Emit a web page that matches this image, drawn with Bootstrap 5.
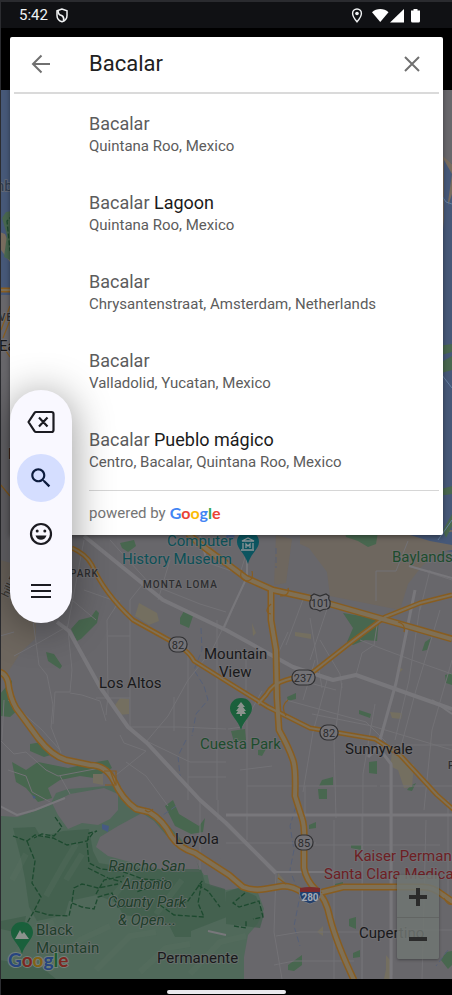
<!DOCTYPE html>
<html lang="en">
<head>
<meta charset="utf-8">
<meta name="viewport" content="width=device-width, initial-scale=1">
<title>Place search</title>
<link rel="stylesheet" href="https://cdn.jsdelivr.net/npm/bootstrap@5.3.0/dist/css/bootstrap.min.css">
<style>
  body { background: #000; font-family: Roboto, "Liberation Sans", sans-serif; color: #202124; }
  .device { border-left: 1px solid #2b2c30; }
  .status-strip { height: 28px; background: #101114; border-top: 2px solid #2a2b2f; color: #f1f3f4; font-size: 15px; padding: 0 31px 0 18px; }
  .map-layer { top: 62px; background: #68676b; }
  .search-panel { margin: 9px 9px 0; padding: 0 4px; background: #fff; border-radius: 2px; box-shadow: 0 2px 5px rgba(0,0,0,.4); z-index: 1; }
  .search-head { height: 57px; border-bottom: 2px solid #dadada; padding: 0 15px 2px; }
  .icon-btn { border: 0; background: transparent; padding: 0; line-height: 0; color: #707070; }
  .query { font-size: 22px; line-height: 28px; color: #212121; border: 0; outline: 0; background: transparent; margin: 0 16px 0 36px; padding: 0; min-width: 0; }
  .results { padding-top: 1px; }
  .place { padding: 18px 0 17px 75px; line-height: 22px; color: #5c5c5c; }
  .place:hover { background: #f6f6f6; color: #5c5c5c; }
  .place-name { font-size: 18px; }
  .place-name b { font-weight: 400; color: #1b1b1b; }
  .place-area { font-size: 15px; }
  .credit { margin-left: 75px; height: 45px; border-top: 1px solid #d6d6d6; font-size: 15px; color: #757575; }
  .logo { font-family: Lato, "Liberation Sans", sans-serif; font-weight: 700; font-size: 16px; }
  .g-blue { color: #4285f4; } .g-red { color: #ea4335; } .g-yellow { color: #fbbc05; } .g-green { color: #34a853; }
  .tool-pill { left: 9px; top: 362px; padding: 8px 7px 9px; border-radius: 31px; background: #f9f8ff; box-shadow: 0 4px 40px rgba(0,0,0,.42); z-index: 2; }
  .tool-btn { width: 48px; height: 48px; border: 0; border-radius: 50%; background: transparent; color: #1b1b21; padding: 0; }
  .tool-btn.current { background: #d5deff; color: #0c1b3d; }
  .zoom-box { right: 13px; bottom: 20px; width: 42px; background: rgba(112,117,114,.85); box-shadow: 0 1px 3px rgba(0,0,0,.35); border-radius: 2px; }
  .zoom-box button { height: 42px; border: 0; background: transparent; color: #2b2b2b; padding: 0; }
  .zoom-box button + button { border-top: 1px solid #626563; }
  .home-strip { height: 16px; }
  .home-strip span { width: 119px; height: 4px; border-radius: 2px; background: #e9e8ec; margin-bottom: 1px; }
  .map-text { font-size: 15px; fill: #19191a; stroke: #737276; stroke-width: 2px; stroke-opacity: .6; paint-order: stroke; stroke-linejoin: round; }
  .map-text .area { font-size: 10px; font-weight: 500; letter-spacing: 1px; fill: #2d2d2f; }
  .map-text .shield { font-size: 11px; fill: #2a2a2c; stroke: none; text-anchor: middle; }
</style>
<script src="https://cdn.jsdelivr.net/npm/bootstrap@5.3.0/dist/js/bootstrap.bundle.min.js"></script>
</head>
<body>
<div class="device d-flex flex-column min-vh-100">
  <header class="status-strip d-flex align-items-center justify-content-between">
    <div class="d-flex align-items-center gap-2">
      <span>5:42</span>
      <svg width="12" height="15" viewBox="0 0 12 15" fill="none" stroke="currentColor" stroke-width="1.5" aria-hidden="true"><path d="M6 1L1 2.800v4.600c0 3 2.200 5.400 5 6.400 2.800-1 5-3.400 5-6.400V2.800z"/><path d="M2 2.600c0 3.500 1.500 4 4 5.200 1.600 .8 2 2.200 1.700 5" stroke-width="1.700"/></svg>
    </div>
    <div class="d-flex align-items-center">
      <svg width="12" height="15" viewBox="0 0 12 15" fill="none" stroke="currentColor" stroke-width="1.400" aria-hidden="true"><path d="M6 1C3.300 1 1.600 3 1.600 5.400 1.600 8.500 6 13.800 6 13.800s4.400-5.300 4.400-8.400C10.400 3 8.700 1 6 1z"/><circle cx="6" cy="5.500" r="1.800" fill="currentColor" stroke="none"/></svg>
      <svg class="ms-2" width="50" height="15" viewBox="0 0 50 15" fill="#fff" aria-hidden="true"><path d="M1 4.200C5.500 0 13 0 17.500 4.200L9.250 14z"/><path d="M19 14.500L33 1v13.500z"/><path d="M40 2.500h2.500V1h4v1.500H49V13a1.500 1.500 0 0 1-1.500 1.500h-6A1.500 1.500 0 0 1 40 13z"/></svg>
    </div>
  </header>

  <main class="position-relative flex-grow-1 d-flex flex-column">
    <div class="map-layer position-absolute start-0 end-0 bottom-0 overflow-hidden">
      <svg class="d-block w-100 h-100" viewBox="1 90 451 889" preserveAspectRatio="xMidYMin slice" role="img" aria-label="Map of Mountain View">
        <!-- water and shoreline -->
        <path fill="#465878" d="M0 90h14v205H0zM438 145l14 12v125l-14 14z"/>
        <path fill="#465878" d="M438 282h14v270l-14-2z"/>
        <path fill="#786c5e" d="M0 232l5 2 5 12v16l-9-12zM438 150l14 14v30l-8 24-6 70z"/>
        <path fill="#465878" d="M444 160l8 14-4 28 4 18v70l-8 8z"/>
        <path fill="#48674f" d="M2 218l4-6 6-1v50l-8-4 3-22zM438 346l14-2v8l-14 4zM438 364l14-8v14l-14 4z"/>
        <path fill="#68676b" d="M438 90h14v74l-14-12z"/>
        <path fill="#6e675f" d="M300 530h152v20l-12 2-18 14-14 18-8 26-70-14-3-24-18-24-9-4z"/>
        <path fill="#6e675f" d="M0 560l36 10v68l-15 14-13 20-8-2zM276 535l16 4-6 44-12 2z"/>
        <path fill="#465878" d="M400 532h52v13l-22-4z"/>
        <path fill="#48674f" d="M345 532h33l-2 12-8 3-10-6-12-4zM438 490l14-4v8l-14 2zM443 530l9-16v12l-6 12z"/>
        <!-- terrain in the south-west -->
        <path fill="#50695a" d="M0 816l17 1 18-6 15-6 6-12 12-4 52-4 4 14 36 17 30 33 10 20 4 6h22l12 12 20 6 6 16-6 14-10 12-4 22v28H0z"/>
        <path fill="#68676b" d="M52 803l18-9 34-6 14 6v16l-8 9-12 6-16-2-14 6-10-14zM96 847l4-10 18-11 24-13 12 8 12 14 28 18 6 19h-30l-22-6-18-4-22-6z"/>
        <path fill="#68676b" d="M206 868l14-10 12 18 10 12-16 2-16-4z"/>
        <g fill="#405f4c">
          <path d="M13 828l22-1 6 10 22-6 26-2 4 22 6 12 24 4 36 2h42l4 14 20 6 2 28-36 14v6h-16l-6-12-14-6-32-4-6-12-20-8-28 6-4 14-28 6-8-14-4-28-4-20zM26 916l-2 10-10 6-13-3v-8zM226 892l12-4 18 8 8 18-4 14-34-4zM0 960l40 6 16 13H0z" opacity=".75"/>
        </g>
        <g stroke="#5a7362" stroke-width="6" opacity=".25" fill="none">
          <path d="M12 960l22-30 20-8M50 970l30-30 30-14M96 970l34-34 26-4M140 972l26-24 24-4M190 974l30-32 26-6M46 896l18-32 12-20M66 880l16-26M12 880l14-26M110 900l24-28M156 914l26-34"/>
        </g>
        <!-- neighbourhood parks -->
        <g fill="#48674f">
          <path d="M71 629l8-9 12-3 5-7 3 3-2 10-16 16-4 2zM46 652l8 2 8 12-2 3-12-8zM120 543l14-3 2 6-8 6-6-4zM180 618l4-7 9 5-4 12-9-4zM343 613l36 6-2 22-12-1-12 5-6-3 6-14zM425 642l6-4-4 12-5 1zM445 675l7-2v12l-6-2zM287 697l9-4v6l-8 2zM359 710l12 4-1 4-11-4zM231 731l14-2 1 11-12 2zM258 750l8-1-4 7-4-1zM369 762l8-1v13l-8-1zM322 780l11-3v8l-14 1zM318 789h9v10h-8zM410 786l6-3-4 8-5-1zM0 694l12-14v20l8 8-10 9-10-1zM30 744l12-2 12 12-10 3-14-6zM12 762l14 8 12-8 30 6 28-6 12-2 4 8-18 10-14-2-20 4-12 8 4 10-14 4-12-14-10-6zM309 825l7-3v6l-7 1zM351 845h10v5l-10-2zM335 884l8-2v4h-8zM349 919l7-2v12l-7-3zM353 953l7-3v7l-7 1zM288 965l14-10v10l-8 6-6-1zM165 806l8-6 6 14 20 12 6-8-2 14-12 2-16-8zM441 960l5-8 6-1v14l-4 4z"/>
        </g>
        <g fill="#746f60">
          <path d="M139 603l18 10 2 8-10 4-14-9zM120 698l9 1v15l-10 1-6-7zM93 774h10v11l-10-2zM295 632l16 2v5l-16-3zM252 623l4 10-3 3zM390 712l12 1-1 6-9-1zM392 753l22 12-2 22-8 1-6-18-8-4zM278 873l7 8-8 2zM317 932l6-6v10zM386 955l4 5v19h-6l2-10zM397 667l6 2-3 3z"/>
        </g>
        <path fill="#465a82" d="M102 824l7 2-1 6-6-3zM227 531h8l-1 8-8-1zM32 795l4 2-2 2z"/>
        <!-- creeks -->
        <g fill="none" stroke="#566078" stroke-width="1">
          <path stroke-dasharray="6 3" d="M201 628l1 22-8 20 10 16 4 14-12 14-4 22M186 740l-8 16 2 20M296 806l-6 20 4 24-4 20 10 26-6 30 6 20M176 806l-20 14M276 548v20M448 950l-12 16"/>
          <path d="M438 190l8 12 6 2M438 370l14 18M438 540l14-20" stroke="#6380a0"/>
        </g>
        <!-- local streets -->
        <g fill="none" stroke="#737276" stroke-width="1">
          <path d="M84 540l-17 90M120 600l-13 20 1 75-2 20M108 636h22M33 620l6 45 8 10 6 30-2 22 10 26M14 656l26-14 28-16M68 630l4 40-2 22h-15l-2 32M70 693l12 2 18 6 6 20M96 698h34M130 600v127M188 645v155M174 697v34M217 620v180M0 740l14 14 12-2 20 18 12 6 42-8M130 727h50l46 2M120 735l4 8 22 8-30 24M146 742l22-26 20-36 24-30 10-20M126 762l20 14 22 30M140 738l50 24h36M188 777h38M8 700l14 12 20 18 18 20M200 560l40 14 6-20M170 560l-12 40M110 540l40 44 50 20 26 8"/>
          <path d="M247 537v40l-16 36-6 14M236 650l20 8M246 655v35M247 720v100M247 786h130M305 786v34M303 700l12-40M286 645l12-32 6-16M320 640l20 34 2 14M327 680l-14 52-10 60M342 683l-8 60 2 75M336 690l-30-8M360 640l20 8 32 12 40 14M356 675l6-22 12-8 4-26M375 704l-12 70-1 205M312 714l60 12 80 24M286 700l80 22 20 20M378 747l14 18M392 765v210M421 600l-12 80-14 60M440 610l-24 80-16 60M452 660l-20 70-8 80M240 770l32-4M228 729l14-2 20-36M376 571h20l12-30M376 571v30M409 566l43 14M396 745h56M380 786h72M334 820v159M362 815v164M247 815v25M226 843h90M276 872l-2 60 8 47M276 936l24-4h80M274 965l20-4h60M392 930h60M426 820l-4 159M448 800v100M300 845h140"/>
          <path d="M310 618l12 70M330 600l-20 60M288 632l-14 30M430 570l-10 40M8 770l18 6 6 16 18 10M60 776l10 18M4 700l-2 40M200 800v70M218 800v20M14 600l12 10M72 600l24 20M84 590l34 12M130 600l16-20M0 636l14-4"/>
        </g>
        <g fill="none" stroke="#78777b" stroke-linejoin="round">
          <path stroke-width="4" d="M57 622l12 9 31 56 28 40 19 16 53 57 26 23 50 50M84 536l79 64 63 30 67 37 40 13 23-5 96 34"/>
          <path stroke-width="3" d="M415 590l-19 93-18 64 13 17v215M226 815h226M378 747l-10 10"/>
          <path stroke-width="2" d="M0 806l17 9 18-5 30-12M247 545v32l-14 30-10 22M276 872h60M226 935l-18-4M409 566l43 12M200 536l6 22M432 700l20 14"/>
        </g>
        <!-- highways -->
        <g fill="none" stroke="#885d20" stroke-linejoin="round">
          <g stroke-width="5">
            <path d="M72 548q14 6 20 17 12 28 41 55l45 25q12 8 16 16l32 20 42 26 42 21 65 11 25 16 37 40 17 15"/>
            <path d="M452 595l-32 8-35 14-35 26-37 29-27 8q-14 4-20 15l-8 9M0 290h12"/>
          </g>
          <g stroke-width="7">
            <path d="M188 534q16 14 38 29l20 15 27 12 36 8 70 20 73 21"/>
            <path d="M271 590v30l5 30 1 48 2 32q10 18 14 30 3 8 2 36l7 22q3 8 2 30v20q2 12 12 22 10 8 14 28 6 24 24 62"/>
            <path d="M0 672q6 2 8 10 2 16 8 26l22 30q14 18 28 22l24 5q16 0 24 16 8 18 22 28l13 3q14 8 22 24 8 12 24 17l34 22 14 12q10 4 22 2l18-3q10 0 20 7 10 2 20-1l20-5h80q10 0 20 8l10 7"/>
          </g>
        </g>
        <g fill="none" stroke="#7f7056" stroke-linejoin="round">
          <g stroke-width="2">
            <path d="M72 548q14 6 20 17 12 28 41 55l45 25q12 8 16 16l32 20 42 26 42 21 65 11 25 16 37 40 17 15"/>
            <path d="M452 595l-32 8-35 14-35 26-37 29-27 8q-14 4-20 15l-8 9M0 290h12"/>
          </g>
          <g stroke-width="4">
            <path d="M188 534q16 14 38 29l20 15 27 12 36 8 70 20 73 21"/>
            <path d="M271 590v30l5 30 1 48 2 32q10 18 14 30 3 8 2 36l7 22q3 8 2 30v20q2 12 12 22 10 8 14 28 6 24 24 62"/>
            <path d="M0 672q6 2 8 10 2 16 8 26l22 30q14 18 28 22l24 5q16 0 24 16 8 18 22 28l13 3q14 8 22 24 8 12 24 17l34 22 14 12q10 4 22 2l18-3q10 0 20 7 10 2 20-1l20-5h80q10 0 20 8l10 7"/>
          </g>
        </g>
        <g fill="none" stroke="#885d20" stroke-width="1.200">
          <path d="M242 570q-4 8 4 11 8 0 6-10M280 596q10 0 8-8M271 604q-8 8 0 10M104 771h12v14h-11M110 770l5 14M310 890l-2 10 14-8M278 878l8 6M0 484l10 12M398 622q8 2 6 10M444 898q4 8 8 6M286 716q-6-10 2-16M145 810q4 4 8-1M1 330l9-24M3 338l7-18M2 345l8 12"/>
        </g>
        <!-- hiking trails -->
        <g fill="none" stroke="#1d4a2f" stroke-width="1.300" stroke-dasharray="5 2">
          <path d="M13 836l14 5 8-6 18 3 14 7 20-4 6-8 4-2-8 2-2 10 2 20 12 6 20 2 22 8 24 2M27 841l8 20-3 22 9 14-7 14-8 14M35 911l14 4 20 1 3-14 2-14 8-4 16 4 20-4M55 817l7 10-8 9-12-2-8 4M72 903l10 4 12 2 4-12 14-4 6 14 18-2M88 868l20 10 14 4M96 894l8-14 20-4M160 880l-6 6-18 6M160 905l14 10 30 2-6-14 4-22-14 20-12 4M198 885l10 6 12 16M245 893l-12 10 6 4 20-6 4 16-10 2M234 926l12 2v-8M13 215l-6 6 3 30"/>
        </g>
        <!-- route shields -->
        <g fill="#737276" stroke="#303032" stroke-width="1.200">
          <rect x="169" y="637" width="18" height="15" rx="7"/>
          <rect x="320" y="725" width="18" height="15" rx="7"/>
          <rect x="295" y="835" width="18" height="15" rx="7"/>
          <rect x="292" y="670" width="23" height="15" rx="7"/>
          <path d="M311 596l3-2 6 2 6-2 3 2q-1 3 1 5 1 7-3 8-4 0-7 2-3-2-7-2-4-1-3-8 2-2 1-5z"/>
        </g>
        <path fill="#223f6c" stroke="#77767a" d="M300 889h20q3 12-10 15-13-3-10-15z"/>
        <path fill="#7b2a2c" d="M300 888q10-2 20 0v4h-20z"/>
        <!-- place pins -->
        <path fill="#17603a" d="M241 698c-7 0-11 5-11 10.500 0 7 8 11 11 21.500 3-10.500 11-14.500 11-21.500 0-5.500-4-10.500-11-10.500zM22 922c-7 0-11 5-11 10.500 0 7 8 11 11 21.500 3-10.500 11-14.500 11-21.500 0-5.500-4-10.500-11-10.500z" opacity=".95"/>
        <path fill="#8b928d" d="M241 702l-4 5h2l-3 4h2l-2 3h4v2h2v-2h4l-2-3h2l-3-4h2zM15 939l5-9 2 4 2-2 5 7z"/>
        <path fill="#0c5560" d="M248 532c-7 0-11 4-11 10 0 7 8 11 11 22 3-11 11-15 11-22 0-6-4-10-11-10z"/>
        <path fill="none" stroke="#8b9496" stroke-width="1.300" d="M242 541l6-3 6 3zM243 543v6M253 543v6M241 550h13M246 548v-4l2 2 2-2v4"/>
        <!-- labels -->
        <g class="map-text">
          <g fill="#0c5057"><text x="167" y="546">Computer</text><text x="122" y="564">History Museum</text></g>
          <g fill="#1d4c2d"><text x="392" y="562">Baylands</text><text x="200" y="749">Cuesta Park</text></g>
          <g fill="#203e2a"><text x="36" y="935">Black</text><text x="36" y="953">Mountain</text></g>
          <g fill="#203e2a" font-style="italic" text-anchor="middle"><text x="147" y="871">Rancho San</text><text x="147" y="889">Antonio</text><text x="147" y="907">County Park</text><text x="147" y="925">&amp; Open...</text></g>
          <g fill="#6d2024"><text x="354" y="861">Kaiser Permanente</text><text x="324" y="879">Santa Clara Medical</text></g>
          <text x="204" y="659">Mountain</text><text x="219" y="677">View</text>
          <text x="99" y="688">Los Altos</text><text x="345" y="754">Sunnyvale</text>
          <text x="175" y="844">Loyola</text><text x="157" y="963">Permanente</text><text x="359" y="938">Cupertino</text>
          <text x="-4" y="191" fill="#2e3c50">nb</text><text x="-1" y="351">Ea</text>
          <text class="area" x="-1" y="321">VE</text><text class="area" x="70" y="577">PARK</text><text class="area" x="143" y="588">MONTA LOMA</text><text class="area" x="448" y="769">P</text>
          <text x="8" y="459">L</text>
          <text transform="translate(8 598) rotate(-64)" font-size="11" fill="#39352e">hill Rd</text>
          <text class="shield" x="178" y="649">82</text><text class="shield" x="329" y="737">82</text><text class="shield" x="304" y="847">85</text><text class="shield" x="303" y="682">237</text><text class="shield" x="320" y="607">101</text>
          <text x="310" y="901" text-anchor="middle" font-size="10" font-weight="700" fill="#a4aab5" stroke="none">280</text>
        </g>
        <text x="8" y="967" font-family="Lato, sans-serif" font-weight="700" font-size="19" stroke="#73807a" stroke-width="2" paint-order="stroke"><tspan fill="#27457f">G</tspan><tspan fill="#7c2720">o</tspan><tspan fill="#836316">o</tspan><tspan fill="#27457f">g</tspan><tspan fill="#1e5c30">l</tspan><tspan fill="#7c2720">e</tspan></text>
      </svg>
      <div class="zoom-box position-absolute d-flex flex-column">
        <button type="button" aria-label="Zoom in"><svg width="18" height="18" viewBox="0 0 18 18" stroke="currentColor" stroke-width="4" aria-hidden="true"><path d="M0 9h18M9 0v18"/></svg></button>
        <button type="button" aria-label="Zoom out"><svg width="18" height="18" viewBox="0 0 18 18" stroke="currentColor" stroke-width="4" aria-hidden="true"><path d="M0 9h18"/></svg></button>
      </div>
    </div>

    <section class="search-panel position-relative" aria-label="Search places">
      <div class="search-head d-flex align-items-center">
        <button class="icon-btn" type="button" aria-label="Back"><svg width="24" height="24" viewBox="0 0 24 24" fill="none" stroke="currentColor" stroke-width="2" aria-hidden="true"><path d="M21 12H4.500M12.500 3.500L4 12l8.500 8.500"/></svg></button>
        <input class="query flex-grow-1" type="text" value="Bacalar" aria-label="Search">
        <button class="icon-btn" type="button" aria-label="Clear"><svg width="24" height="24" viewBox="0 0 24 24" fill="none" stroke="currentColor" stroke-width="2" aria-hidden="true"><path d="M5 5l14 14M19 5L5 19"/></svg></button>
      </div>
      <nav class="results d-flex flex-column" aria-label="Results">
        <a class="place text-decoration-none" href="#"><div class="place-name">Bacalar</div><div class="place-area">Quintana Roo, Mexico</div></a>
        <a class="place text-decoration-none" href="#"><div class="place-name">Bacalar <b>Lagoon</b></div><div class="place-area">Quintana Roo, Mexico</div></a>
        <a class="place text-decoration-none" href="#"><div class="place-name">Bacalar</div><div class="place-area">Chrysantenstraat, Amsterdam, Netherlands</div></a>
        <a class="place text-decoration-none" href="#"><div class="place-name">Bacalar</div><div class="place-area">Valladolid, Yucatan, Mexico</div></a>
        <a class="place text-decoration-none" href="#"><div class="place-name">Bacalar <b>Pueblo mágico</b></div><div class="place-area">Centro, Bacalar, Quintana Roo, Mexico</div></a>
      </nav>
      <div class="credit d-flex align-items-center gap-1">
        <span>powered by</span>
        <span class="logo"><span class="g-blue">G</span><span class="g-red">o</span><span class="g-yellow">o</span><span class="g-blue">g</span><span class="g-green">l</span><span class="g-red">e</span></span>
      </div>
    </section>

    <div class="tool-pill position-absolute d-flex flex-column gap-2" role="toolbar" aria-label="Keyboard tools">
      <button class="tool-btn" type="button" aria-label="Delete"><svg width="28" height="24" viewBox="0 0 28 24" fill="none" stroke="currentColor" stroke-width="2.200" stroke-linejoin="round" aria-hidden="true"><path d="M9 2h15.500a2 2 0 0 1 2 2v16a2 2 0 0 1-2 2H9a2 2 0 0 1-1.500-.8L1.500 12l6-9.200A2 2 0 0 1 9 2zM12 7.500l8.500 9M20.500 7.500l-8.500 9"/></svg></button>
      <button class="tool-btn current" type="button" aria-label="Search"><svg width="26" height="26" viewBox="0 0 24 24" fill="currentColor" aria-hidden="true"><path d="M15.500 14h-.79l-.28-.27C15.410 12.590 16 11.110 16 9.500 16 5.910 13.090 3 9.500 3S3 5.910 3 9.500 5.910 16 9.500 16c1.610 0 3.090-.59 4.230-1.570l.27.28v.79l5 4.990L20.490 19l-4.990-5zm-6 0C7.010 14 5 11.990 5 9.500S7.010 5 9.500 5 14 7.010 14 9.500 11.990 14 9.500 14z"/></svg></button>
      <button class="tool-btn" type="button" aria-label="Emoji"><svg width="24" height="24" viewBox="0 0 24 24" fill="currentColor" aria-hidden="true"><circle cx="12" cy="12" r="10" fill="none" stroke="currentColor" stroke-width="2.200"/><circle cx="8.200" cy="9" r="1.500"/><circle cx="15.800" cy="9" r="1.500"/><path d="M6.500 13.500h11c-.8 2.700-2.900 4.300-5.500 4.300s-4.700-1.600-5.500-4.300z"/></svg></button>
      <button class="tool-btn" type="button" aria-label="Menu"><svg width="20" height="16" viewBox="0 0 20 16" stroke="currentColor" stroke-width="2" aria-hidden="true"><path d="M0 2h20M0 8h20M0 14h20"/></svg></button>
    </div>
  </main>

  <footer class="home-strip d-flex align-items-end justify-content-center"><span></span></footer>
</div>
</body>
</html>
